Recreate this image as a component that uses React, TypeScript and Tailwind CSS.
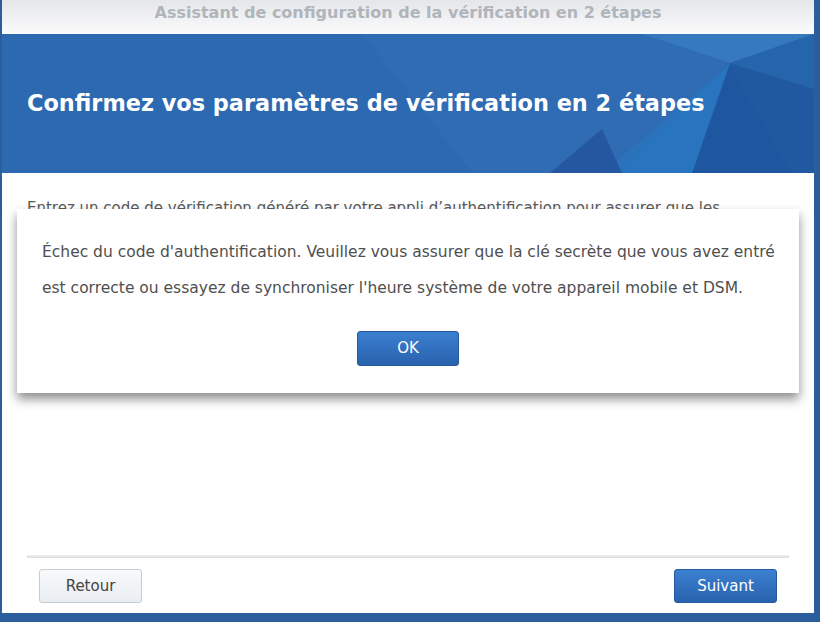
const font = '"DejaVu Sans", Verdana, sans-serif';

function BannerFacets() {
  return (
    <svg
      className="absolute inset-0 h-full w-full"
      viewBox="0 0 812 139"
      preserveAspectRatio="none"
      aria-hidden="true"
    >
      <rect width="812" height="139" fill="#2c69b0" />
      <polygon points="360,0 640,0 728,29 600,139 470,139" fill="#3170b6" opacity="0.5" />
      <polygon points="640,0 812,0 728,29" fill="#3679be" />
      <polygon points="812,0 812,55 728,29" fill="#2565ab" />
      <polygon points="728,29 812,55 812,139 790,139" fill="#2159a0" />
      <polygon points="728,29 790,139 690,139" fill="#1f56a0" />
      <polygon points="728,29 690,139 615,139" fill="#2874bf" />
      <polygon points="600,139 728,29 615,139" fill="#2b72ba" />
      <polygon points="548,139 600,95 620,139" fill="#22529a" opacity="0.8" />
    </svg>
  );
}

export default function App() {
  return (
    <div
      className="w-[820px] h-[622px] bg-[#2b5e9c] pl-[2px] pr-[6px] pb-[9px] overflow-hidden"
      style={{ fontFamily: font }}
    >
      <div className="flex h-full flex-col bg-white">
        {/* Title bar */}
        <div className="flex h-[34px] shrink-0 justify-center bg-gradient-to-b from-[#e4e6e9] to-[#fbfbfc] pt-[3px]">
          <span className="text-[16px] font-bold leading-5 text-[#b0b5bb]">
            Assistant de configuration de la vérification en 2 étapes
          </span>
        </div>

        {/* Banner */}
        <div className="relative h-[139px] shrink-0 overflow-hidden">
          <BannerFacets />
          <div className="relative flex h-full items-center pl-[25px]">
            <h1 className="text-[22.4px] font-bold text-white">
              Confirmez vos paramètres de vérification en 2 étapes
            </h1>
          </div>
        </div>

        {/* Content */}
        <div className="relative flex-1 px-[25px] pt-[25px]">
          <p className="text-[15px] leading-5 text-[#5a5a5a]">
            Entrez un code de vérification généré par votre appli d’authentification pour assurer que les
          </p>

          {/* Alert dialog */}
          <div className="absolute left-[15px] top-[36px] flex h-[184px] w-[782px] flex-col bg-white pl-[25px] pr-[12px] pt-[25px] shadow-[0_6px_10px_rgba(0,0,0,0.45)]">
            <p className="text-[15.5px] leading-[36px] text-[#4f4f4f]">
              Échec du code d'authentification. Veuillez vous assurer que la clé secrète que vous avez entré est correcte ou essayez de synchroniser l'heure système de votre appareil mobile et DSM.
            </p>
            <div className="mt-[25px] flex justify-center pr-[13px]">
              <button className="h-[35px] w-[102px] rounded-[3px] border border-[#2459a0] bg-gradient-to-b from-[#3b80d0] to-[#2962ad] text-[15px] text-white">
                OK
              </button>
            </div>
          </div>
        </div>

        {/* Footer */}
        <div className="shrink-0 px-[25px]">
          <div className="h-[3px] bg-gradient-to-b from-[#f0f0f0] to-[#dcdcdc]" />
          <div className="flex items-center justify-between px-[12px] pb-[10px] pt-[11px]">
            <button className="h-[34px] w-[103px] rounded-[3px] border border-[#c8cdd3] bg-gradient-to-b from-[#f8fafc] to-[#eaeef2] text-[15px] text-[#444]">
              Retour
            </button>
            <button className="h-[34px] w-[103px] rounded-[3px] border border-[#2459a0] bg-gradient-to-b from-[#3b80d0] to-[#2962ad] text-[15px] text-white">
              Suivant
            </button>
          </div>
        </div>
      </div>
    </div>
  );
}
